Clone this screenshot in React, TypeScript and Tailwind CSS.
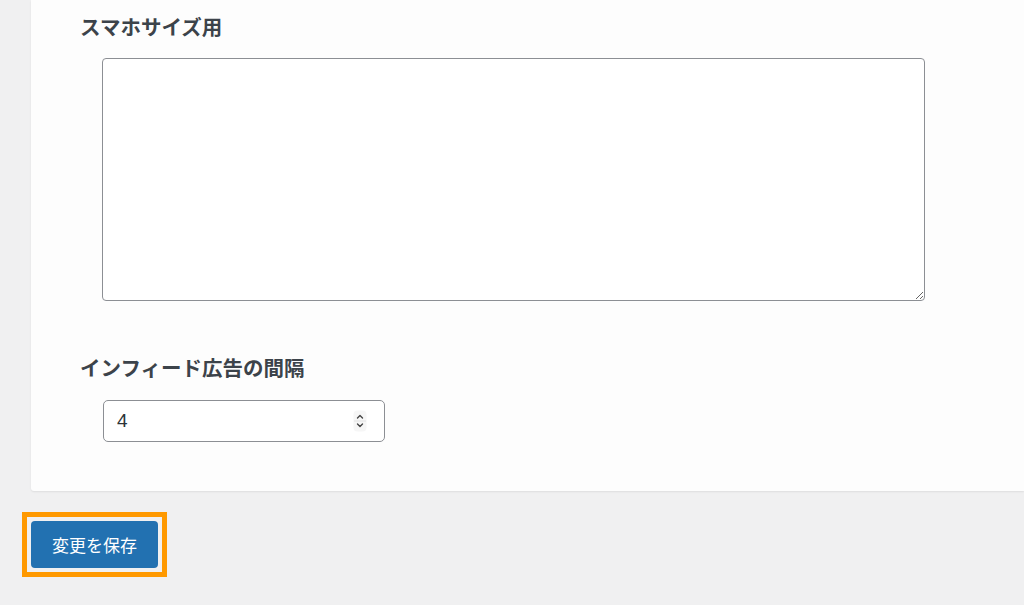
const font = { fontFamily: '"Noto Sans CJK JP", "Noto Sans", sans-serif' };

function Spinner() {
  return (
    <svg width="14" height="22" viewBox="0 0 14 22" className="absolute right-[18px] top-1/2 -translate-y-1/2 pointer-events-none">
      <rect x="0.5" y="0.5" width="13" height="21" rx="4" fill="#f6f6f6" />
      <line x1="1" y1="11" x2="13" y2="11" stroke="#e2e2e2" strokeWidth="1" />
      <path d="M4.5 8 L7 5.5 L9.5 8" fill="none" stroke="#444" strokeWidth="1.4" strokeLinecap="round" strokeLinejoin="round" />
      <path d="M4.5 14 L7 16.5 L9.5 14" fill="none" stroke="#444" strokeWidth="1.4" strokeLinecap="round" strokeLinejoin="round" />
    </svg>
  );
}

export default function App() {
  return (
    <div className="min-h-[605px] w-full overflow-hidden bg-[#f0f0f1]" style={font}>
      <div className="ml-[31px] bg-[#fdfdfd] pb-[49px] rounded-bl-[3px] shadow-[0_1px_2px_rgba(0,0,0,0.08)]">
        <div className="pl-[49px] pt-[11px] text-[20.5px] leading-[30px] font-bold text-[#3c434a]">
          スマホサイズ用
        </div>
        <div className="mt-[17px] pl-[71px]">
          <textarea
            className="block w-[823px] h-[243px] bg-white border border-[#8c8f94] rounded-[4px] outline-none"
            defaultValue=""
          />
        </div>
        <div className="mt-[51px] pl-[49px] text-[20.5px] leading-[30px] font-bold text-[#3c434a]">
          インフィード広告の間隔
        </div>
        <div className="mt-[18px] pl-[72px]">
          <div className="relative w-[282px] h-[42px]">
            <input
              type="text"
              defaultValue="4"
              className="w-full h-full bg-white border border-[#8c8f94] rounded-[5px] pl-[13px] text-[19px] text-[#2c3338] outline-none"
              style={{ fontFamily: '"Liberation Sans", "Noto Sans", sans-serif' }}
            />
            <Spinner />
          </div>
        </div>
      </div>
      <div className="mt-[21px] ml-[22px] inline-block border-[5px] border-[#ff9900] p-[4px] bg-[#f0f0f1]">
        <button className="block w-[127px] h-[47px] rounded-[4px] bg-[#2271b1] text-white text-[17px]">
          変更を保存
        </button>
      </div>
    </div>
  );
}
